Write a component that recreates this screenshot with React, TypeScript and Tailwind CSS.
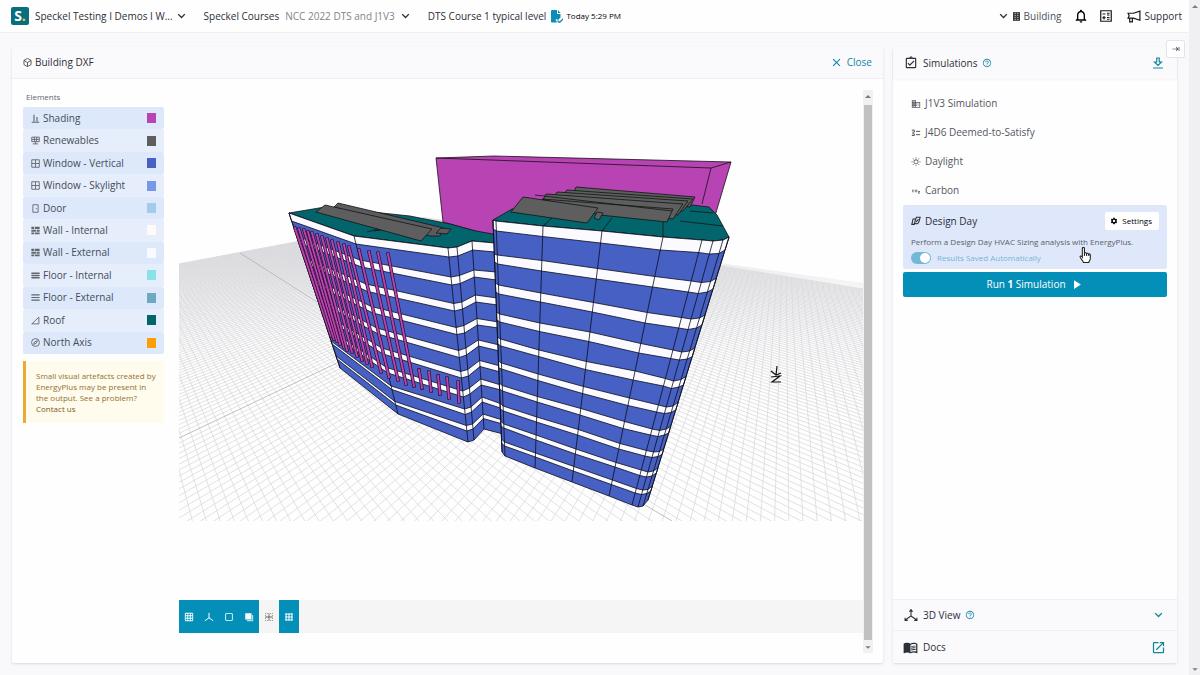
import type { ReactNode } from "react";
import {
  MdBorderInner,
  MdCheckBoxOutlineBlank,
  MdClose,
  MdCo2,
  MdDomain,
  MdGridOn,
  MdHelpOutline,
  MdKeyboardTab,
  MdMenuBook,
  MdNotificationsNone,
  MdOpenInNew,
  MdOutlineAssignmentTurnedIn,
  MdOutlineWbSunny,
  MdPlayArrow,
  MdSettings,
} from "react-icons/md";

type Point = [number, number];

const elements: { name: string; icon: ReactNode; color: string }[] = [
  {
    name: "Shading",
    color: "#b843b2",
    icon: (
      <Glyph>
        <path strokeWidth="3" d="M2 22h20M8 20V2M16 20V8" />
      </Glyph>
    ),
  },
  {
    name: "Renewables",
    color: "#5e5e5e",
    icon: (
      <Glyph>
        <path d="M2 3h20v12H2zM2 9h20M9 3v12M15 3v12M12 15v6M5 21h14" />
      </Glyph>
    ),
  },
  { name: "Window - Vertical", color: "#4660c4", icon: <WindowIcon /> },
  { name: "Window - Skylight", color: "#7698e8", icon: <WindowIcon /> },
  {
    name: "Door",
    color: "#a3cbee",
    icon: (
      <Glyph>
        <path d="M5 2h14v20H5zM14 11v3" />
      </Glyph>
    ),
  },
  { name: "Wall - Internal", color: "#fffafa", icon: <WallIcon /> },
  { name: "Wall - External", color: "#f8faff", icon: <WallIcon /> },
  {
    name: "Floor - Internal",
    color: "#86e3e8",
    icon: (
      <Glyph>
        <path strokeWidth="4" d="M1 6h22M1 12h22M1 18h22" />
      </Glyph>
    ),
  },
  {
    name: "Floor - External",
    color: "#6ea9c2",
    icon: (
      <Glyph>
        <path strokeWidth="3" d="M1 5h22M1 12h22M1 19h22" />
      </Glyph>
    ),
  },
  {
    name: "Roof",
    color: "#03656c",
    icon: (
      <Glyph>
        <path d="M2 21 21 3v18z" />
      </Glyph>
    ),
  },
  {
    name: "North Axis",
    color: "#fb9e08",
    icon: (
      <Glyph>
        <circle cx="12" cy="12" r="10.5" />
        <path d="m7 17 3-7 7-3-3 7z" />
      </Glyph>
    ),
  },
];

const simulations: { name: string; icon: ReactNode }[] = [
  { name: "J1V3 Simulation", icon: <MdDomain /> },
  {
    name: "J4D6 Deemed-to-Satisfy",
    icon: (
      <Glyph>
        <path d="M2 5h6v5H3M2 18h6v-4H3M12 8h10M12 16h10" />
      </Glyph>
    ),
  },
  { name: "Daylight", icon: <MdOutlineWbSunny /> },
  { name: "Carbon", icon: <MdCo2 /> },
];

const tools: { name: string; icon: ReactNode; on: boolean }[] = [
  { name: "Grid", icon: <MdGridOn />, on: true },
  { name: "Axes", icon: <AxesIcon />, on: true },
  { name: "Outline", icon: <MdCheckBoxOutlineBlank />, on: true },
  {
    name: "Solid",
    on: true,
    icon: (
      <svg viewBox="0 0 24 24" className="h-[1em] w-[1em]" fill="currentColor">
        <path d="M3 3h15v15H3z" />
        <path opacity=".7" d="M19 7h3v15H7v-3h12z" />
      </svg>
    ),
  },
  { name: "Section", icon: <MdBorderInner />, on: false },
  {
    name: "Snap",
    on: true,
    icon: (
      <Glyph>
        <path d="M3 5h18M3 12h18M3 19h18M5 3v18M12 3v18M19 3v18" />
      </Glyph>
    ),
  },
];

export default function App() {
  return (
    <div className="flex h-screen min-h-[600px] bg-[#f9f9fc] font-['Open_Sans',sans-serif] text-[10px] text-[#2b2f38]">
      <div className="flex min-w-0 flex-1 flex-col">
        <TopBar />
        <main className="flex min-h-0 flex-1 gap-[10px] pt-[14px] pr-3 pb-3 pl-3">
          <ModelPanel />
          <SidePanel />
        </main>
      </div>
      <Scrollbar className="w-[11px] bg-[#f0f0f3]" />
    </div>
  );
}

function TopBar() {
  return (
    <header className="flex h-[33px] shrink-0 items-center border-b border-[#f0f0f3] bg-[#fefefe] pr-[7px] pl-[11px]">
      <span className="flex h-[18px] w-[18px] items-center justify-center rounded-xs bg-[#0b6e7c] text-[14px] leading-none font-bold text-white">
        S<span className="text-[#e8cf52]">.</span>
      </span>
      <button type="button" className="ml-[6px] flex items-center gap-1 font-medium">
        Speckel Testing I Demos I W... <Chevron />
      </button>
      <button type="button" className="ml-[18px] flex items-center gap-[6px]">
        Speckel Courses
        <span className="text-[#82858c]">NCC 2022 DTS and J1V3</span>
        <Chevron />
      </button>
      <span className="ml-[18px]">DTS Course 1 typical level</span>
      <svg viewBox="0 0 24 26" className="ml-[5px] h-[13px] w-3" fill="#0a8db5">
        <path d="M2 0h10v8h7v7l-5 5-3-2-2 2 4 5H2a2 2 0 0 1-2-2V2a2 2 0 0 1 2-2zM14 0l5 6h-5z" />
        <path d="m13 21 4 4 7-7" fill="none" stroke="#0a8db5" strokeWidth="2.5" />
      </svg>
      <span className="ml-[3px] text-[8px] text-black">Today 5:29 PM</span>

      <nav className="ml-auto flex items-center">
        <button type="button" className="flex items-center gap-1">
          <Chevron />
          <svg viewBox="0 0 16 20" className="ml-px h-[9px] w-[7px]">
            <path fill="#3b3b3f" d="M0 0h16v20H0z" />
            <path stroke="#e5e5e5" strokeWidth="1.8" strokeDasharray="2.500 2" d="M5 2v17M11 2v17" />
          </svg>
          <span className="text-[#4e5158]">Building</span>
        </button>
        <button type="button" aria-label="Notifications" className="ml-3 text-[16px] text-black">
          <MdNotificationsNone />
        </button>
        <button type="button" aria-label="Calculator" className="ml-[11px]">
          <svg viewBox="0 0 24 24" className="h-3 w-3" fill="none" stroke="#15151c" strokeWidth="2.4">
            <path d="M1.5 1.5h21v21h-21zM5 8h6M14 6.5h5M14 10h5M8 12v7M4.5 15.5h7M14 15h5M14 18.5h5" />
          </svg>
        </button>
        <button type="button" className="ml-[15px] flex items-center gap-[3px]">
          <svg viewBox="0 0 26 24" className="h-[13px] w-[14px]" fill="none" stroke="#15151c" strokeWidth="2.2">
            <path d="M2 6h10l12-4v17l-12-4H2l2-4.500zM5 15v7h5v-6" />
          </svg>
          Support
        </button>
      </nav>
    </header>
  );
}

function ModelPanel() {
  return (
    <section className="flex min-w-0 flex-1 flex-col rounded-xs bg-[#fefefe] shadow-sm">
      <div className="flex h-8 shrink-0 items-center justify-between border-b border-[#f0f0f2] bg-[#fafafd] px-[11px]">
        <h1 className="flex items-center gap-[3px] font-medium">
          <svg viewBox="0 0 24 24" className="h-[9px] w-[9px]" fill="none" stroke="currentColor" strokeWidth="2">
            <path d="m12 1 9.500 5.500v11L12 23l-9.500-5.500v-11zM2.500 6.500 12 12l9.500-5.500M12 12v11" />
          </svg>
          Building DXF
        </h1>
        <button type="button" className="flex items-center gap-1 font-medium text-[#0f86a8]">
          <MdClose className="text-[13px]" /> Close
        </button>
      </div>

      <div className="flex min-h-0 flex-1 pt-[11px] pr-[10px] pb-[10px] pl-[11px]">
        <aside className="w-[141px] shrink-0">
          <h2 className="h-[17px] pl-[3px] text-[8px] leading-[14px] text-[#62656c]">Elements</h2>
          <ul className="flex h-[247px] flex-col">
            {elements.map((element) => (
              <li key={element.name} className="flex-1 rounded-xs odd:bg-[#dde8fb] even:bg-[#e6edfb]">
                <button type="button" className="flex h-full w-full items-center pr-2 pl-2 text-left text-[#444c59]">
                  <span className="text-[9px] text-[#62666e]">{element.icon}</span>
                  <span className="ml-[3px] flex-1">{element.name}</span>
                  <span className="h-[10px] w-[9px]" style={{ background: element.color }} />
                </button>
              </li>
            ))}
          </ul>
          <p className="mt-[7px] border-l-[3px] border-[#e9ab33] bg-[#fffbed] py-[9px] pr-2 pl-[10px] text-[8px] leading-[11px] text-[#93712f]">
            Small visual artefacts created by EnergyPlus may be present in the output. See a problem?{" "}
            <a href="#contact" className="block text-[#7c5a1c]">
              Contact us
            </a>
          </p>
        </aside>

        <div className="ml-[15px] flex min-w-0 flex-1 flex-col pb-[20px]">
          <BuildingModel />
          <div className="mt-auto flex h-[33px] shrink-0 bg-[#f5f5f5]">
            {tools.map((tool) => (
              <button
                key={tool.name}
                type="button"
                aria-label={tool.name}
                className={`flex w-5 items-center justify-center text-[10px] ${
                  tool.on ? "bg-[#038fb7] text-white" : "text-[#6b5c4c]"
                }`}
              >
                {tool.icon}
              </button>
            ))}
          </div>
        </div>
        <Scrollbar thumb className="w-[10px] bg-[#f1f1f1]" />
      </div>
    </section>
  );
}

function SidePanel() {
  return (
    <aside className="relative flex w-[284px] shrink-0 flex-col rounded-xs bg-[#fefefe] shadow-sm">
      <button
        type="button"
        aria-label="Collapse panel"
        className="absolute -top-[7px] -right-2 z-10 flex h-[18px] w-[19px] items-center justify-center rounded-xs border border-[#e4e4e8] bg-white text-[8px]"
      >
        <MdKeyboardTab />
      </button>
      <div className="flex h-8 shrink-0 items-center bg-[#fafafd] pr-[13px] pl-[11px] shadow-xs">
        <MdOutlineAssignmentTurnedIn className="text-[14px]" />
        <h2 className="ml-[5px] font-medium">Simulations</h2>
        <MdHelpOutline className="ml-[5px] text-[10px] text-[#2c8fae]" />
        <button type="button" aria-label="Download" className="ml-auto text-[#138799]">
          <svg viewBox="0 0 24 24" className="h-3 w-3" fill="none" stroke="currentColor" strokeWidth="2.4">
            <path d="M9.500 2h5v8H19l-7 7-7-7h4.500zM2 22h20" />
          </svg>
        </button>
      </div>

      <div className="flex-1 px-[10px] pt-[10px]">
        <ul>
          {simulations.map((simulation) => (
            <li key={simulation.name}>
              <button type="button" className="flex h-[29px] items-center pl-2 text-[#54575e]">
                <span className="text-[10px]">{simulation.icon}</span>
                <span className="ml-1">{simulation.name}</span>
              </button>
            </li>
          ))}
        </ul>
        <div className="relative rounded-xs bg-[#dfe8fa] px-2 pt-[7px] pb-[5px]">
          <div className="flex items-center">
            <svg viewBox="0 0 24 24" className="h-[10px] w-[10px]" fill="none" stroke="#2b2f38" strokeWidth="2.6">
              <path d="M2 20 5 7h6L8 20zM10 11l3-8h9l-3 11c-2 5-6 6-9 3M12 14l6-6" />
            </svg>
            <h3 className="ml-1 font-medium">Design Day</h3>
            <button
              type="button"
              className="ml-auto flex h-[18px] items-center gap-1 rounded-xs bg-white pr-[7px] pl-[5px] text-[8px] text-black"
            >
              <MdSettings className="text-[8px]" /> Settings
            </button>
          </div>
          <p className="mt-[6px] text-[8px] leading-[11px] text-[#5a5e66]">
            Perform a Design Day HVAC Sizing analysis with EnergyPlus.
          </p>
          <label className="mt-[5px] flex items-center gap-[6px] text-[8px] leading-3 font-medium text-[#76b5d9]">
            <input
              type="checkbox"
              defaultChecked
              className="h-3 w-5 appearance-none rounded-full bg-[#74b8d8] p-px before:block before:h-[10px] before:w-[10px] before:rounded-full before:bg-white checked:before:translate-x-2"
            />
            Results Saved Automatically
          </label>
          <HandCursor />
        </div>
        <button
          type="button"
          className="mt-[3px] flex h-[25px] w-full items-center justify-center gap-[3px] rounded-xs bg-[#038fb7] font-medium text-white"
        >
          <span>
            Run <b>1</b> Simulation
          </span>
          <MdPlayArrow className="text-[15px]" />
        </button>
      </div>

      <button type="button" className="flex h-8 shrink-0 items-center border-y border-[#f0f0f3] bg-[#fafafd] pr-[14px] pl-[11px]">
        <svg viewBox="0 0 26 24" className="h-[13px] w-[14px]" fill="none" stroke="currentColor" strokeWidth="2">
          <path d="M13 2v11L3 20M13 13l10 7M10 5l3-4 3 4M2 16v5h5M24 16v5h-5" />
        </svg>
        <span className="ml-[5px] font-medium">3D View</span>
        <MdHelpOutline className="ml-[5px] text-[10px] text-[#2c8fae]" />
        <Chevron className="ml-auto text-[#138799]" />
      </button>
      <a href="#docs" className="flex h-8 shrink-0 items-center bg-[#fafafd] pr-[11px] pl-[10px]">
        <MdMenuBook className="text-[15px]" />
        <span className="ml-[5px] font-medium">Docs</span>
        <MdOpenInNew className="ml-auto text-[15px] text-[#138799]" />
      </a>
    </aside>
  );
}

function Scrollbar({ className, thumb }: { className: string; thumb?: boolean }) {
  return (
    <div aria-hidden className={`flex shrink-0 flex-col items-center justify-between ${className}`}>
      <svg viewBox="0 0 10 10" className="my-px h-[11px] w-[10px] shrink-0">
        <path d="M5 3.500 8 6.500H2z" fill="#7c7c80" />
      </svg>
      {thumb && <div className="my-[2px] w-2 flex-1 bg-[#c1c1c1]" />}
      <svg viewBox="0 0 10 10" className="my-px h-[9px] w-[10px] shrink-0">
        <path d="M5 6.500 2 3.500h6z" fill="#7c7c80" />
      </svg>
    </div>
  );
}

function Glyph({ children }: { children: ReactNode }) {
  return (
    <svg viewBox="0 0 24 24" className="h-[1em] w-[1em]" fill="none" stroke="currentColor" strokeWidth="2.4">
      {children}
    </svg>
  );
}

function WindowIcon() {
  return (
    <Glyph>
      <path d="M2 2h20v20H2zM12 2v20M2 12h20" />
    </Glyph>
  );
}

function WallIcon() {
  return (
    <svg viewBox="0 0 24 24" className="h-[1em] w-[1em]" fill="currentColor">
      <path d="M1 2h7v6H1zM10 2h13v6H10zM1 10h12v5H1zM15 10h8v5h-8zM1 17h7v5H1zM10 17h13v5H10z" />
    </svg>
  );
}

function AxesIcon() {
  return (
    <Glyph>
      <path d="M12 2v12L2 21M12 14l10 7" />
    </Glyph>
  );
}

function Chevron({ className = "" }: { className?: string }) {
  return (
    <svg viewBox="0 0 12 8" className={`h-[6px] w-[9px] ${className}`} fill="none" stroke="currentColor" strokeWidth="1.8">
      <path d="m1.500 1.500 4.500 4.500 4.500-4.500" />
    </svg>
  );
}

function HandCursor() {
  return (
    <svg viewBox="0 0 22 30" className="absolute top-[42px] right-[76px] h-4 w-3" fill="#fff" stroke="#222" strokeWidth="2">
      <path d="M6 18V3c0-3 4-3 4 0v9c0-2 4-2 4 1 0-2 3-2 4 1 0-2 3-1 3 1v6c0 4-2 5-3 8H8c-1-4-4-5-6-10-1-3 2-3 4 0zM10 12v5M14 13v4M18 14v3" />
    </svg>
  );
}

// Facade edges: each runs from its top to its bottom point and lists the
// start and end height of every white slab band between them.
interface Edge {
  top: Point;
  bottom: Point;
  bands: number[];
}

const leftWing: Edge[] = [
  {
    top: [289, 213],
    bottom: [340, 368],
    bands: [213, 221, 236, 243, 257, 264, 277, 283, 295, 301, 312, 317, 327, 332, 341, 344, 356, 359],
  },
  {
    top: [354, 236],
    bottom: [398, 414],
    bands: [236, 244, 260, 267, 284, 291.5, 306.5, 313, 328, 334, 348, 354, 367.5, 373, 386, 389.5, 401.5, 405],
  },
  {
    top: [448, 248],
    bottom: [468, 442],
    bands: [248, 257, 277, 285, 303.5, 311, 327.5, 334.5, 350.5, 357.5, 371.5, 378, 391, 397, 409, 414.5, 425.5, 431],
  },
  {
    top: [457, 247],
    bottom: [474, 440],
    bands: [247, 256, 275.5, 283.5, 302, 309, 325.5, 333, 348, 355, 369.5, 376, 388, 394, 407, 412, 424, 429],
  },
  {
    top: [472, 241],
    bottom: [484, 429],
    bands: [241, 250, 270, 277, 295, 302, 318.5, 325, 340, 346, 360.5, 366.5, 379, 385, 397, 402, 414, 418.5],
  },
  {
    top: [495, 243],
    bottom: [503, 434],
    bands: [243, 252, 272, 280, 298, 305, 322, 328, 345, 351, 366, 372, 385, 390, 404, 408.5, 420, 424],
  },
];

const rightWing: Edge[] = [
  {
    top: [493, 220],
    bottom: [502, 452],
    bands: [220, 229, 254, 262, 283, 292, 312, 320, 337, 344, 361, 368, 383, 389, 403, 409, 421, 426, 439, 443],
  },
  {
    top: [496, 221],
    bottom: [505, 456],
    bands: [221, 231, 255, 264, 285, 294, 314, 322, 339, 346, 363, 369, 385.5, 391, 406, 411, 424, 428, 442, 446],
  },
  {
    top: [543, 226],
    bottom: [535, 468],
    bands: [226, 236.5, 260.5, 271, 293, 302, 323, 331.5, 350, 356.5, 374, 380.5, 396.5, 402, 417, 422, 435, 440, 453, 457],
  },
  {
    top: [602, 231],
    bottom: [572, 482],
    bands: [231, 243, 268.5, 279, 302.5, 312, 332, 341.5, 361.5, 369.5, 386.5, 393.5, 408.5, 415, 429.5, 435, 449, 454, 466.5, 471],
  },
  {
    top: [663, 237],
    bottom: [609, 496],
    bands: [237, 250, 276.5, 287, 312.5, 323, 343.5, 353, 371, 380, 398, 405.5, 421.5, 428.5, 443.5, 449, 462.5, 467, 480, 484.5],
  },
  {
    top: [702, 240],
    bottom: [632, 505],
    bands: [240, 252.5, 281, 292, 317.5, 328, 350, 358.5, 378.5, 386, 405, 412, 429, 435, 450.5, 456, 470, 475.5, 488.5, 493],
  },
  {
    top: [713, 241],
    bottom: [638, 507],
    bands: [241, 254, 282.5, 293.5, 319, 329.5, 352, 360, 381, 388.5, 407, 413.5, 430.5, 436.5, 452, 457.5, 472, 477, 490, 494.5],
  },
  {
    top: [723, 240],
    bottom: [643, 506],
    bands: [240, 253.5, 281.5, 292, 318, 328, 351, 359, 379.5, 387, 406, 412.5, 429, 435, 451.5, 456.5, 471, 476, 489.5, 493.5],
  },
  {
    top: [729, 237],
    bottom: [648, 500],
    bands: [237, 250, 278, 289, 315, 325, 348, 357, 376.5, 385, 402, 410, 426.5, 433, 449, 454.5, 468, 473, 486, 491],
  },
];

const longFins = [
  [295, 228, 331, 336],
  [299, 229, 334, 339],
  [304, 230, 337, 341],
  [308, 232, 340, 344],
  [312, 233, 344, 347],
  [317, 235, 347, 350],
  [322, 237, 352, 352],
  [327, 239, 357, 356],
  [332, 241, 362, 360],
  [338, 243, 367, 363],
  [344, 245, 372, 366],
  [349, 247, 381, 372],
  [359, 250, 389, 377],
  [369, 252, 398, 380],
  [378, 253, 406, 384],
  [388, 254, 414, 386],
];

const shortFins = [
  [419, 370, 422, 388],
  [429, 372, 431, 391],
  [438, 376, 440, 394],
  [447, 378, 449, 398],
  [458, 382, 459, 402],
];

function at(edge: Edge, y: number): Point {
  const t = (y - edge.top[1]) / (edge.bottom[1] - edge.top[1]);
  return [edge.top[0] + t * (edge.bottom[0] - edge.top[0]), y];
}

function toPoints(points: Point[]) {
  return points.map((p) => p.map((n) => n.toFixed(1)).join(",")).join(" ");
}

function Facade({ edges }: { edges: Edge[] }) {
  const outline = [...edges.map((e) => e.top), ...edges.map((e) => e.bottom).reverse()];
  const bandCount = edges[0].bands.length / 2;

  return (
    <g stroke="#0c0e1c" strokeWidth="0.8" strokeLinejoin="round">
      <polygon points={toPoints(outline)} fill="#4660c4" />
      {Array.from({ length: bandCount }, (_, i) => (
        <polygon
          key={i}
          fill="#fafaff"
          points={toPoints([
            ...edges.map((e) => at(e, e.bands[i * 2])),
            ...edges.map((e) => at(e, e.bands[i * 2 + 1])).reverse(),
          ])}
        />
      ))}
      {edges.map((e, i) => (
        <line key={i} x1={e.top[0]} y1={e.top[1]} x2={e.bottom[0]} y2={e.bottom[1]} />
      ))}
    </g>
  );
}

// Ground grid in two-point perspective
const CENTER: Point = [381.6, 341.8];
const VANISH_U: Point = [785, 150];
const VANISH_V: Point = [100, 165];
const CELLS = 100;
const SCALE_U = 1.037 / CELLS;
const SCALE_V = 1.02 / CELLS;
const NEAR = 0.12;

function project(u: number, v: number): Point {
  const a = u * SCALE_U;
  const b = v * SCALE_V;
  const w = 1 + a + b;
  return [
    (CENTER[0] + a * VANISH_U[0] + b * VANISH_V[0]) / w,
    (CENTER[1] + a * VANISH_U[1] + b * VANISH_V[1]) / w,
  ];
}

function gridPath() {
  let d = "";
  for (let i = -CELLS; i <= CELLS; i++) {
    if (i === 0) continue;
    const fromV = Math.max(-CELLS, (NEAR - 1 - i * SCALE_U) / SCALE_V);
    const fromU = Math.max(-CELLS, (NEAR - 1 - i * SCALE_V) / SCALE_U);
    if (fromV < CELLS) d += `M${project(i, fromV)}L${project(i, CELLS)}`;
    if (fromU < CELLS) d += `M${project(fromU, i)}L${project(CELLS, i)}`;
  }
  return d;
}

const GRID = gridPath();

function BuildingModel() {
  return (
    <svg viewBox="179 90 684 431" className="w-full min-w-0 shrink" role="img" aria-label="Building model">
      <defs>
        <linearGradient id="haze" x1="0" y1="0" x2="0" y2="1">
          <stop offset="0" stopColor="#d9d9dd" />
          <stop offset="0.35" stopColor="#e4e4e7" stopOpacity="0.6" />
          <stop offset="1" stopColor="#fefefe" stopOpacity="0" />
        </linearGradient>
      </defs>

      <polygon points="179,264 410,220 863,283 863,350 179,350" fill="url(#haze)" />
      <path d={GRID} stroke="#dadade" strokeWidth="0.8" fill="none" />
      <path d="M179 438 337 363M240 253 317 302M640 502 672 521" stroke="#b0b0b3" strokeWidth="0.8" />

      <g stroke="#17121a" strokeWidth="0.8" strokeLinejoin="round">
        <polygon points="436,158 494,156 731,162 715,216 700,240 493,236 443,222" fill="#b843b2" />
        <path d="M436 158 711 168 731 162M711 168 702 204" fill="none" />

        <polygon
          points="289,213 325,207 410,216 450,224 476,231 493,234 495,243 472,241 457,247 448,248 354,236"
          fill="#03656c"
        />
        <polygon points="334,207 338,203 444,228 440,236 430,236" fill="#5b5b5b" />
        <polygon points="441,228 451,229 447,234 436,233" fill="#5b5b5b" />
        <polygon points="316,212 325,205 432,229 421,241" fill="#5e5e5e" />
        <path d="M367 232 378 229M374 231 381 230" />
      </g>

      <Facade edges={leftWing} />

      <g stroke="#35102f" strokeLinecap="square">
        {[...longFins, ...shortFins].map(([x1, y1, x2, y2]) => (
          <g key={x1}>
            <line x1={x1} y1={y1} x2={x2} y2={y2} strokeWidth="3.4" />
            <line x1={x1} y1={y1} x2={x2} y2={y2} stroke="#b843b2" strokeWidth="1.9" />
          </g>
        ))}
      </g>

      <g stroke="#0f1414" strokeWidth="0.8" strokeLinejoin="round">
        <polygon
          points="493,220 512,209 560,203 692,205 709,207 717,215 729,237 723,240 713,241 702,240 663,237 602,231 543,226 496,221"
          fill="#03656c"
        />
        <path d="M543 226 552 218M602 231 612 218M663 237V222M680 221 723 226M690 211 713 213" />
        <g fill="#5e5e5e">
          <polygon points="576,187 695,197 690,207 572,197" />
          <polygon points="567,190 693,199 683,211 560,198" />
          <polygon points="557,192 688,201 678,215 552,200" />
          <polygon points="546,194 683,204 673,219 542,202" />
          <polygon points="542,199 673,209 667,222 600,215" />
          <polygon points="594,218 597,212 603,213 599,220" />
          <polygon points="511,212 523,197 598,208 587,223" />
        </g>
        <path d="M535 195 672 211" />
      </g>

      <Facade edges={rightWing} />

      <g stroke="#111" strokeWidth="1.2" fill="none">
        <path d="M777 366 776 375M771 371 776 375 781 373" />
        <path d="M771 377 780 376 772 382 781 382" />
      </g>
    </svg>
  );
}
